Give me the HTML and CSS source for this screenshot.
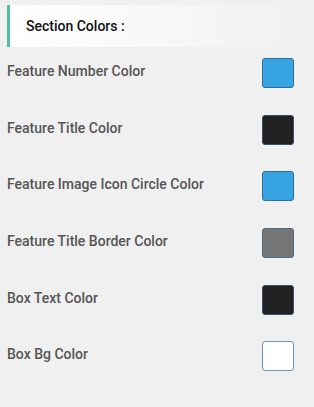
FILE: index.html
```html
<!DOCTYPE html>
<html>
<head>
    <meta charset="UTF-8">
    <title>Section Colors</title>
    <link rel="stylesheet" href="styles.css">
</head>
<body>
<div class="panel">
    <div class="section-head">Section Colors :</div>
    <ul class="color-list">
        <li class="color-row"><span class="label">Feature Number Color</span><span class="swatch blue"></span></li>
        <li class="color-row"><span class="label">Feature Title Color</span><span class="swatch dark"></span></li>
        <li class="color-row"><span class="label">Feature Image Icon Circle Color</span><span class="swatch blue"></span></li>
        <li class="color-row"><span class="label">Feature Title Border Color</span><span class="swatch gray"></span></li>
        <li class="color-row"><span class="label">Box Text Color</span><span class="swatch dark"></span></li>
        <li class="color-row"><span class="label">Box Bg Color</span><span class="swatch white"></span></li>
    </ul>
</div>
</body>
</html>
```
FILE: styles.css
```css
*{ margin:0; padding:0; box-sizing:border-box;}
li{ list-style-type:none;}
body{
    background:#f0f0f0;
    font-family:Roboto,"Liberation Sans",sans-serif;
}
.panel{
    padding:5px 4px 0 7px;
}
.section-head{
    display:flex;
    align-items:center;
    height:42px;
    padding-left:16px;
    border-left:3px solid #4fbf9f;
    background:linear-gradient(to right,#ffffff,#f0f0f0);
    font-size:14px;
    font-weight:500;
    color:#111;
}
.color-list{
    display:flex;
    flex-direction:column;
    gap:26.7px;
    padding:11px 16px 0 0;
}
.color-row{
    display:flex;
    align-items:center;
    justify-content:space-between;
    height:30px;
}
.label{
    margin-bottom:4px;
    font-size:14px;
    font-weight:500;
    color:#555;
}
.swatch{
    width:32px;
    height:30px;
    border-radius:3px;
    border:1px solid #2b6fa0;
}
.swatch.blue{ background:#37a5e2;}
.swatch.dark{ background:#222; border-color:#35506a;}
.swatch.gray{ background:#767676; border-color:#4a6a88;}
.swatch.white{ background:#fff; border-color:#6b93b8;}
```
